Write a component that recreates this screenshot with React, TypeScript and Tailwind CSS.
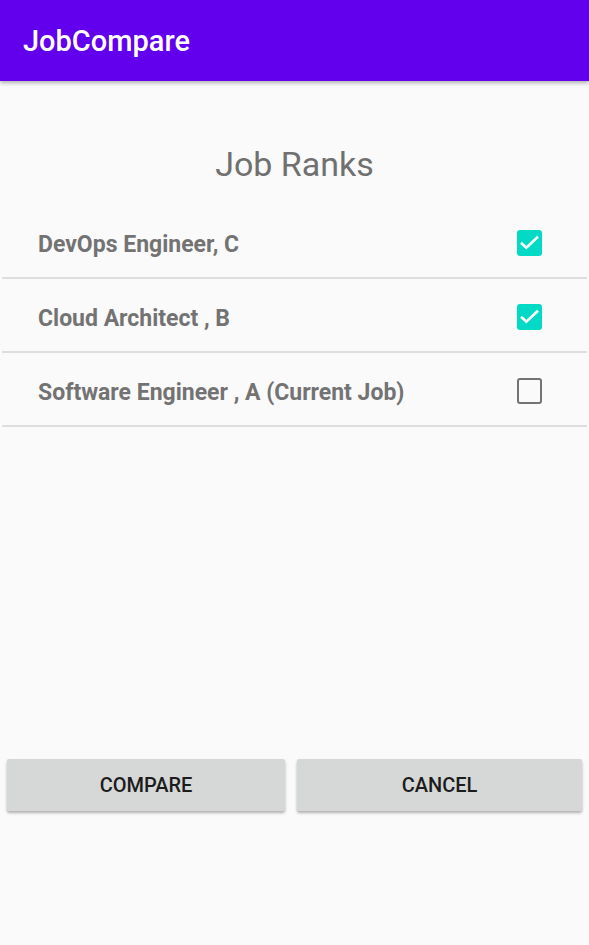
import React from "react";

const rows = [
  { label: "DevOps Engineer, C", checked: true },
  { label: "Cloud Architect , B", checked: true },
  { label: "Software Engineer , A (Current Job)", checked: false },
];

function Check({ checked }: { checked: boolean }) {
  if (checked) {
    return (
      <div className="w-[25px] h-[26px] rounded-[3px] bg-[#03dac5]">
        <svg width="25" height="26" viewBox="0 0 25 26">
          <path d="M4 12.8 L9.3 17.8 L21 6.8" fill="none" stroke="#ffffff" strokeWidth="2.6" />
        </svg>
      </div>
    );
  }
  return <div className="w-[25px] h-[26px] rounded-[3px] border-[2.5px] border-[#737373]" />;
}

export default function App() {
  return (
    <div className="w-[589px] h-[945px] bg-[#fafafa] flex flex-col" style={{ fontFamily: "Roboto, 'Liberation Sans', sans-serif" }}>
      <div className="h-[81px] bg-[#6200ee] flex items-center pl-[23px] shadow-[0_2px_4px_rgba(0,0,0,0.3)] relative z-10">
        <span className="text-white text-[29px] font-medium mt-[3px]">JobCompare</span>
      </div>
      <div className="flex justify-center mt-[63px]">
        <span className="text-[34px] text-[#707070] leading-[40px]">Job Ranks</span>
      </div>
      <div className="mt-[21px] flex flex-col">
        {rows.map((r) => (
          <div key={r.label} className="mx-[2px] h-[74px] border-b-2 border-[#dedede] flex items-center justify-between pt-[8px] pl-[36px] pr-[45px]">
            <span className="text-[23px] font-bold text-[#737373]">{r.label}</span>
            <div className="mt-[-4px]"><Check checked={r.checked} /></div>
          </div>
        ))}
      </div>
      <div className="flex mt-[332px] px-[7px] gap-[12px]">
        <button className="w-[278px] h-[52px] bg-[#d6d7d7] rounded-[2px] shadow-[0_2px_3px_rgba(0,0,0,0.3)] text-[20px] font-medium text-[#1c1c1c]">COMPARE</button>
        <button className="flex-1 h-[52px] bg-[#d6d7d7] rounded-[2px] shadow-[0_2px_3px_rgba(0,0,0,0.3)] text-[20px] font-medium text-[#1c1c1c]">CANCEL</button>
      </div>
    </div>
  );
}
